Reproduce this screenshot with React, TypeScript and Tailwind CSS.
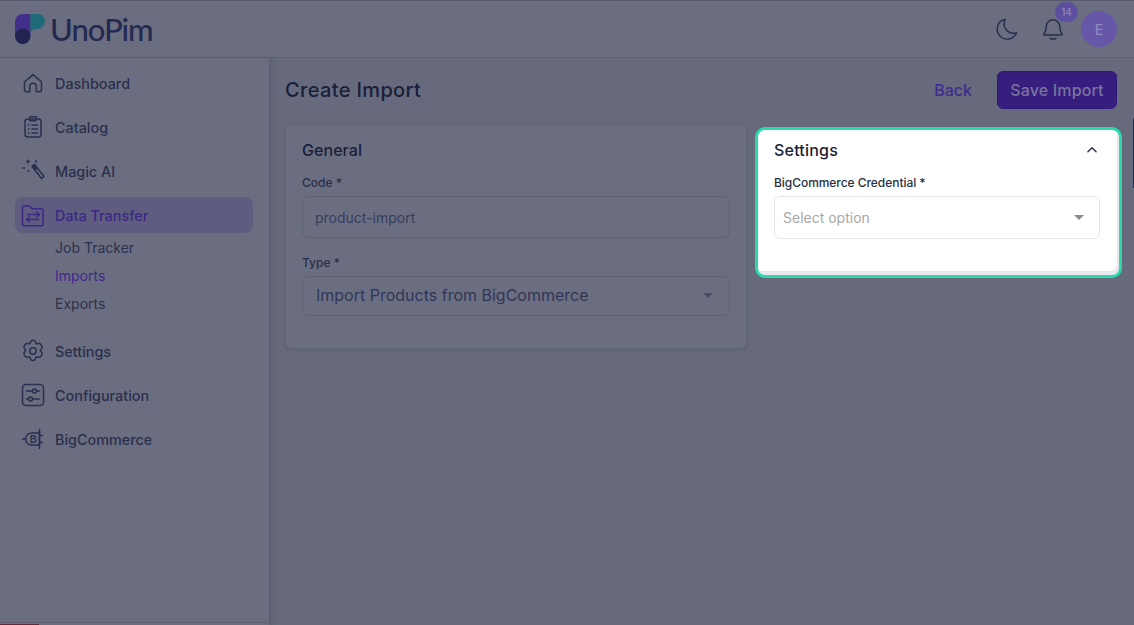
import React from "react";

const stroke = { fill: "none", stroke: "currentColor", strokeWidth: 1.5, strokeLinecap: "round" as const, strokeLinejoin: "round" as const };

const Home = () => (
  <svg width="24" height="24" viewBox="0 0 24 24" {...stroke}>
    <path d="M3.500 11 12 3.600 20.500 11v7.600a2.200 2.200 0 0 1-2.200 2.200h-3v-5.200a3.300 3.300 0 0 0-6.600 0v5.200h-3a2.200 2.200 0 0 1-2.200-2.200z" />
  </svg>
);
const Clip = () => (
  <svg width="24" height="24" viewBox="0 0 24 24" {...stroke}>
    <rect x="4" y="4" width="16" height="18" rx="2.500" />
    <rect x="8.500" y="1.800" width="7" height="4" rx="1.200" />
    <path d="M7.500 10h.5M11 10h5.500M7.500 14h.5M11 14h5.500M7.500 18h.5M11 18h5.500" />
  </svg>
);
const Wand = () => (
  <svg width="24" height="24" viewBox="0 0 24 24" {...stroke}>
    <path d="M11.200 7.600 13.400 5.600l9.500 11.700-2.400 2.200z" strokeWidth="1.600" />
    <path d="M11.200 7.600 13.400 5.600l2.600 3-2.300 2z" fill="currentColor" />
    <path d="M7 1.200v2.600M5.700 2.500h2.600M15 1.600v1.600M2 9h1.400M7.500 11.500v1" />
  </svg>
);
const Folder = () => (
  <svg width="24" height="24" viewBox="0 0 24 24" {...stroke}>
    <path d="M1.500 4.500A1.500 1.500 0 0 1 3 3h5.500l2.500 2.700h9.500A1.500 1.500 0 0 1 22 7.200v14a1.500 1.500 0 0 1-1.500 1.500H3a1.500 1.500 0 0 1-1.500-1.500z" />
    <path d="M5.500 16.500H18M5.500 16.500l3-2.800M5.500 16.500l3 2.800M6.500 11.500h12M18.500 11.500l-3-2.800M18.500 11.500l-3 2.800" strokeWidth="1.300" />
  </svg>
);
const Gear = () => (
  <svg width="24" height="24" viewBox="0 0 24 24" {...stroke}>
    <path d="M12.300 1.300c1 0 1.800.500 2.100 1.500l.4 1.300c.2.500.7.800 1.200.7l1.400-.3c1-.2 1.900.1 2.400 1l1 1.700c.5.900.4 1.800-.3 2.500l-.9 1c-.4.400-.4 1 0 1.400l.9 1c.7.700.8 1.600.3 2.500l-1 1.700c-.5.900-1.400 1.200-2.400 1l-1.400-.3c-.5-.1-1 .2-1.200.7l-.4 1.300c-.3 1-1.100 1.500-2.100 1.500h-.6c-1 0-1.800-.5-2.100-1.500l-.4-1.300c-.2-.5-.7-.8-1.200-.7l-1.400.3c-1 .2-1.900-.1-2.400-1l-1-1.700c-.5-.9-.4-1.800.3-2.500l.9-1c.4-.4.400-1 0-1.400l-.9-1c-.7-.7-.8-1.600-.3-2.500l1-1.700c.5-.9 1.400-1.200 2.400-1l1.400.3c.5.100 1-.2 1.200-.7l.4-1.300c.3-1 1.100-1.500 2.100-1.500z" />
    <circle cx="12" cy="12" r="3.200" />
  </svg>
);
const Sliders = () => (
  <svg width="24" height="24" viewBox="0 0 24 24" {...stroke}>
    <rect x="1.500" y="1.500" width="21" height="21" rx="3.500" />
    <circle cx="13.500" cy="8" r="2" />
    <circle cx="9.500" cy="16" r="2" />
    <path d="M5.500 8h6M15.500 8h3M5.500 16h2M11.500 16h7" />
  </svg>
);
const BC = () => (
  <svg width="24" height="24" viewBox="0 0 24 24" {...stroke}>
    <path d="M18.500 6H11C7 6 4.800 8.800 4.800 12S7 18 11 18h7.500z" />
    <path d="M1.500 12h3.300M18.500 2.500v19M18.500 8.500h3M18.500 15.500h3" />
    <text x="12.200" y="15.800" fontSize="10.500" fontWeight="600" textAnchor="middle" fill="currentColor" stroke="none" fontFamily="Inter, sans-serif">B</text>
  </svg>
);
const Moon = () => (
  <svg width="24" height="24" viewBox="0 0 24 24" {...stroke} strokeWidth="1.400">
    <path d="M10.300 2.300a10 10 0 1 0 11.300 13.300 9 9 0 0 1-3.600.7A9.500 9.500 0 0 1 10.300 2.300z" />
  </svg>
);
const Bell = () => (
  <svg width="24" height="24" viewBox="0 0 24 24" {...stroke} strokeWidth="1.400">
    <path d="M5.300 9.500a6.700 6.700 0 0 1 13.400 0c0 4.500 1.100 6 2.300 7.200.5.500.2 1.300-.5 1.300H3.500c-.7 0-1-.8-.5-1.300 1.200-1.200 2.300-2.700 2.300-7.200z" />
    <path d="M9 21.300c1.800 1 4.200 1 6 0" />
  </svg>
);
const Caret = ({ c }: { c: string }) => (
  <span className={`h-0 w-0 border-x-[5px] border-t-[5px] border-x-transparent ${c}`} />
);

const Item = ({ icon, label, active }: { icon: React.ReactNode; label: string; active?: boolean }) => (
  <div className={`flex h-9 items-center gap-[10px] rounded-lg pl-[6px] text-[14.4px] font-medium ${active ? "bg-[#5f5d7f] text-[#3c2787]" : "text-[#2a2f4e]"}`}>
    {icon}
    <span className="translate-y-px">{label}</span>
  </div>
);

const SubItem = ({ label, active }: { label: string; active?: boolean }) => (
  <div className={`flex h-7 items-center pl-10 text-[14px] ${active ? "text-[#42288d]" : "text-[#2d314e]"}`}>{label}</div>
);

export default function App() {
  return (
    <div className="relative flex h-[625px] w-[1134px] flex-col overflow-hidden bg-[#666a7c] font-['Inter',sans-serif]">
      <header className="flex h-[58px] shrink-0 items-center justify-between border-y border-b-[#5f6275] border-t-[#565a6e] bg-[#6b6e80] pl-[15px] pr-[17px]">
        <div className="flex items-center gap-[5px]">
          <svg width="30" height="30" viewBox="0 0 30 30">
            <path d="M0 8a8 8 0 0 1 8-8h7.500v22H0z" fill="#43308a" />
            <path d="M15.500 0H23a7 7 0 0 1 7 7 8 8 0 0 1-8 8h-1a5.500 5.500 0 0 0-5.500 5.500z" fill="#1f6a78" />
            <path d="M0 22.300a7.700 7.700 0 0 1 15.500 0 7.700 7.700 0 0 1-15.500 0z" fill="#20244f" />
          </svg>
          <span className="text-[31px] font-medium leading-none tracking-[-1px] text-[#24294f] font-['Lato',sans-serif]">UnoPim</span>
        </div>
        <div className="flex items-center">
          <span className="mr-[22px] text-[#272c4c]"><Moon /></span>
          <span className="relative mr-4 text-[#272c4c]">
            <Bell />
            <span className="absolute left-[14px] top-[-15px] flex h-[20px] w-[23px] items-center justify-center rounded-full bg-[#5d4fa0] text-[10px] font-medium text-[#8d88b4]">14</span>
          </span>
          <span className="flex h-9 w-9 items-center justify-center rounded-full bg-[#6757a9] text-[14px] font-medium text-[#8f88bd]">E</span>
        </div>
      </header>

      <div className="flex min-h-0 flex-1">
        <aside className="relative flex w-[269px] shrink-0 flex-col bg-[#6b6e80] pb-[2px] shadow-[3px_0_5px_rgba(40,44,70,0.18)]">
          <nav className="flex flex-1 flex-col gap-2 border-b border-[#5f6275] pl-[15px] pr-4 pt-[7px]">
            <Item icon={<Home />} label="Dashboard" />
            <Item icon={<Clip />} label="Catalog" />
            <Item icon={<Wand />} label="Magic AI" />
            <div>
              <Item icon={<Folder />} label="Data Transfer" active />
              <div className="pb-[8px]">
                <SubItem label="Job Tracker" />
                <SubItem label="Imports" active />
                <SubItem label="Exports" />
              </div>
            </div>
            <Item icon={<Gear />} label="Settings" />
            <Item icon={<Sliders />} label="Configuration" />
            <Item icon={<BC />} label="BigCommerce" />
          </nav>
        </aside>

        <main className="min-w-0 flex-1 pl-[16px] pr-[17px] pt-[13px]">
          <div className="flex h-[38px] items-center justify-between">
            <h1 className="text-[20px] font-medium tracking-[0.35px] text-[#191e3a]">Create Import</h1>
            <div className="flex items-center gap-[25px]">
              <span className="text-[16px] font-medium text-[#3f2c90]">Back</span>
              <span className="flex h-[38px] w-[120px] items-center justify-center rounded-md border border-[#30197a] bg-[#361e7e] text-[16px] font-medium tracking-[0.15px] text-[#7a739f]">Save Import</span>
            </div>
          </div>

          <div className="mt-[15px] flex items-start gap-[11px]">
            <section className="h-[225px] w-[462px] rounded-md border border-[#62667a] bg-[#6b6e80] px-4 pt-[15px] shadow-[0_1px_3px_rgba(40,44,70,0.2)]">
              <h2 className="text-[16px] font-medium leading-5 tracking-[0.05px] text-[#191e3a]">General</h2>
              <label className="mt-[15px] block text-[12px] font-medium leading-4 text-[#292e48]">Code *</label>
              <div className="mt-[5px] flex h-[42px] items-center rounded-md border border-[#5f6376] px-3 text-[14px] text-[#373c5c]">product-import</div>
              <label className="mt-[17px] block text-[12px] font-medium leading-4 text-[#292e48]">Type *</label>
              <div className="mt-[5px] flex h-[40px] items-center justify-between rounded-md border border-[#5f6376] pb-[1px] pl-[13px] pr-[16px] text-[16px] text-[#2f3658]">
                <span className="-translate-y-px">Import Products from BigCommerce</span>
                <Caret c="border-t-[#4a4e66]" />
              </div>
            </section>

            <section className="relative z-10 -ml-[3px] -mr-[5px] mt-[3px] h-[151px] flex-1 rounded-[10px] border-[3px] border-[#2bd9ab] bg-white px-4 pt-[10px] shadow-[inset_-2px_-4px_0_#e8e8ee]">
              <div className="flex h-5 items-center justify-between">
                <h2 className="text-[16px] font-medium leading-5 tracking-[0.2px] text-[#1a2133]">Settings</h2>
                <svg width="14" height="14" viewBox="0 0 24 24" fill="none" stroke="#2a3347" strokeWidth="2.500" strokeLinecap="round" strokeLinejoin="round" className="mr-[4px]">
                  <path d="m5 15 7-7 7 7" />
                </svg>
              </div>
              <label className="mt-[15px] block text-[12px] font-medium leading-4 tracking-[-0.05px] text-[#2a3044]">BigCommerce Credential *</label>
              <div className="mr-[3px] mt-[5px] flex h-[43px] items-center justify-between rounded-md border border-[#e5e7eb] pl-2 pr-[15px] text-[14px] text-[#a8a8a8]">
                <span>Select option</span>
                <Caret c="border-t-[#8a8a8a]" />
              </div>
            </section>
          </div>
        </main>
      </div>

      <span className="absolute bottom-0 left-0 h-px w-[39px] bg-[#5c2b3c]" />
      <span className="absolute right-0 top-[118px] h-[70px] w-px bg-[#143a6c]" />
    </div>
  );
}
